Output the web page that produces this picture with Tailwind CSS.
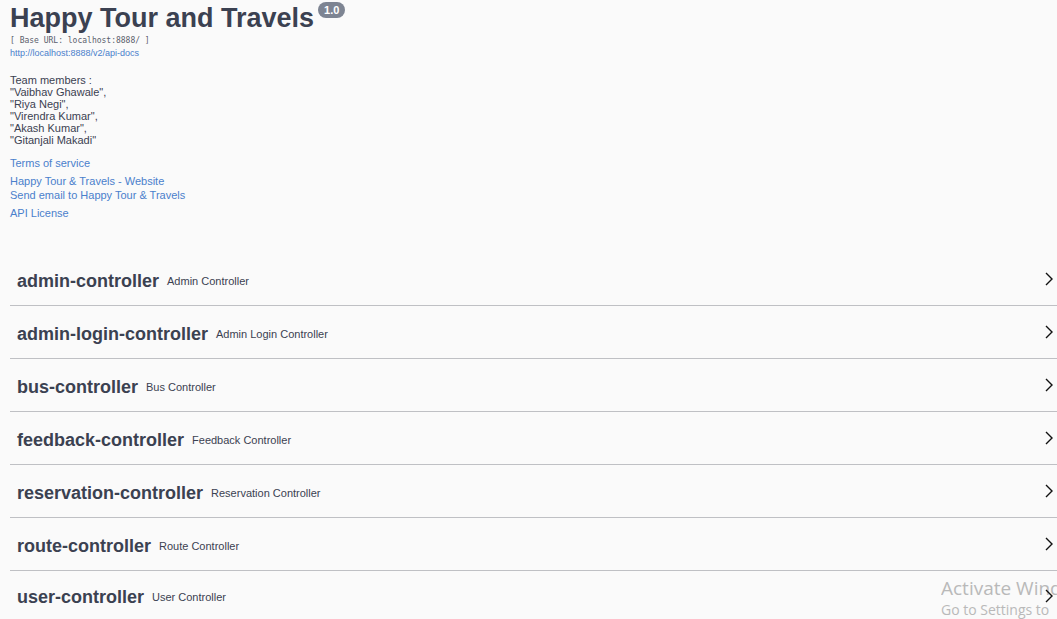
<!DOCTYPE html>
<html lang="en">
<head>
<meta charset="utf-8">
<title>Happy Tour and Travels</title>
<script src="https://cdn.jsdelivr.net/npm/@tailwindcss/browser@4"></script>
</head>
<body class="relative min-h-screen bg-[#fafafa] pl-2.5 font-['Liberation_Sans',Arial,sans-serif] text-[#3b4151]">
<svg class="hidden"><symbol id="chevron" viewBox="0 0 8 14"><path d="M1 1 L7 7 L1 13" fill="none" stroke="#111" stroke-width="1.4"/></symbol></svg>
<header class="pt-0.5">
<div class="flex items-start gap-1">
<h1 class="text-[27px] leading-[33px] font-bold">Happy Tour and Travels</h1>
<span class="rounded-full bg-[#7d8492] px-1.5 text-[11px] leading-4 font-bold text-white">1.0</span>
</div>
<pre class="font-['DejaVu_Sans_Mono',monospace] text-[8px] leading-3 text-[#5b606c]">[ Base URL: localhost:8888/ ]</pre>
<a href="#" class="block text-[9px] leading-3 text-[#4a80cc]">http://localhost:8888/v2/api-docs</a>
<p class="pt-[15px] text-[11px] leading-3">Team members :<br>"Vaibhav Ghawale",<br>"Riya Negi",<br>"Virendra Kumar",<br>"Akash Kumar",<br>"Gitanjali Makadi"</p>
<nav class="flex flex-col items-start pt-2.5 text-[11px] leading-3.5 text-[#4a80cc]">
<a href="#">Terms of service</a>
<a href="#" class="mt-1">Happy Tour &amp; Travels - Website</a>
<a href="#">Send email to Happy Tour &amp; Travels</a>
<a href="#" class="mt-1">API License</a>
</nav>
</header>
<div class="pointer-events-none absolute right-0 bottom-0 w-[116px] overflow-hidden font-['Open_Sans','Noto_Sans',sans-serif] whitespace-nowrap text-[#b9b9b9]">
<p class="text-[19px] leading-6">Activate Windows</p>
<p class="text-[14px] leading-5">Go to Settings to</p>
</div>
<main class="relative pt-[33px]">
<button type="button" class="flex h-[53px] w-full items-center border-b border-[#bfc0c4] pr-1 pl-[7px] text-left"><span class="flex grow items-center gap-2 pt-[3px]"><strong class="text-[18px] leading-6">admin-controller</strong><small class="text-[11px] leading-4">Admin Controller</small></span><svg class="h-3.5 w-2"><use href="#chevron"/></svg></button>
<button type="button" class="flex h-[53px] w-full items-center border-b border-[#bfc0c4] pr-1 pl-[7px] text-left"><span class="flex grow items-center gap-2 pt-[3px]"><strong class="text-[18px] leading-6">admin-login-controller</strong><small class="text-[11px] leading-4">Admin Login Controller</small></span><svg class="h-3.5 w-2"><use href="#chevron"/></svg></button>
<button type="button" class="flex h-[53px] w-full items-center border-b border-[#bfc0c4] pr-1 pl-[7px] text-left"><span class="flex grow items-center gap-2 pt-[3px]"><strong class="text-[18px] leading-6">bus-controller</strong><small class="text-[11px] leading-4">Bus Controller</small></span><svg class="h-3.5 w-2"><use href="#chevron"/></svg></button>
<button type="button" class="flex h-[53px] w-full items-center border-b border-[#bfc0c4] pr-1 pl-[7px] text-left"><span class="flex grow items-center gap-2 pt-[3px]"><strong class="text-[18px] leading-6">feedback-controller</strong><small class="text-[11px] leading-4">Feedback Controller</small></span><svg class="h-3.5 w-2"><use href="#chevron"/></svg></button>
<button type="button" class="flex h-[53px] w-full items-center border-b border-[#bfc0c4] pr-1 pl-[7px] text-left"><span class="flex grow items-center gap-2 pt-[3px]"><strong class="text-[18px] leading-6">reservation-controller</strong><small class="text-[11px] leading-4">Reservation Controller</small></span><svg class="h-3.5 w-2"><use href="#chevron"/></svg></button>
<button type="button" class="flex h-[53px] w-full items-center border-b border-[#bfc0c4] pr-1 pl-[7px] text-left"><span class="flex grow items-center gap-2 pt-[3px]"><strong class="text-[18px] leading-6">route-controller</strong><small class="text-[11px] leading-4">Route Controller</small></span><svg class="h-3.5 w-2"><use href="#chevron"/></svg></button>
<button type="button" class="flex h-[49px] w-full items-center pr-1 pl-[7px] text-left"><span class="flex grow items-center gap-2 pt-[3px]"><strong class="text-[18px] leading-6">user-controller</strong><small class="text-[11px] leading-4">User Controller</small></span><svg class="h-3.5 w-2"><use href="#chevron"/></svg></button>
</main>
</body>
</html>
